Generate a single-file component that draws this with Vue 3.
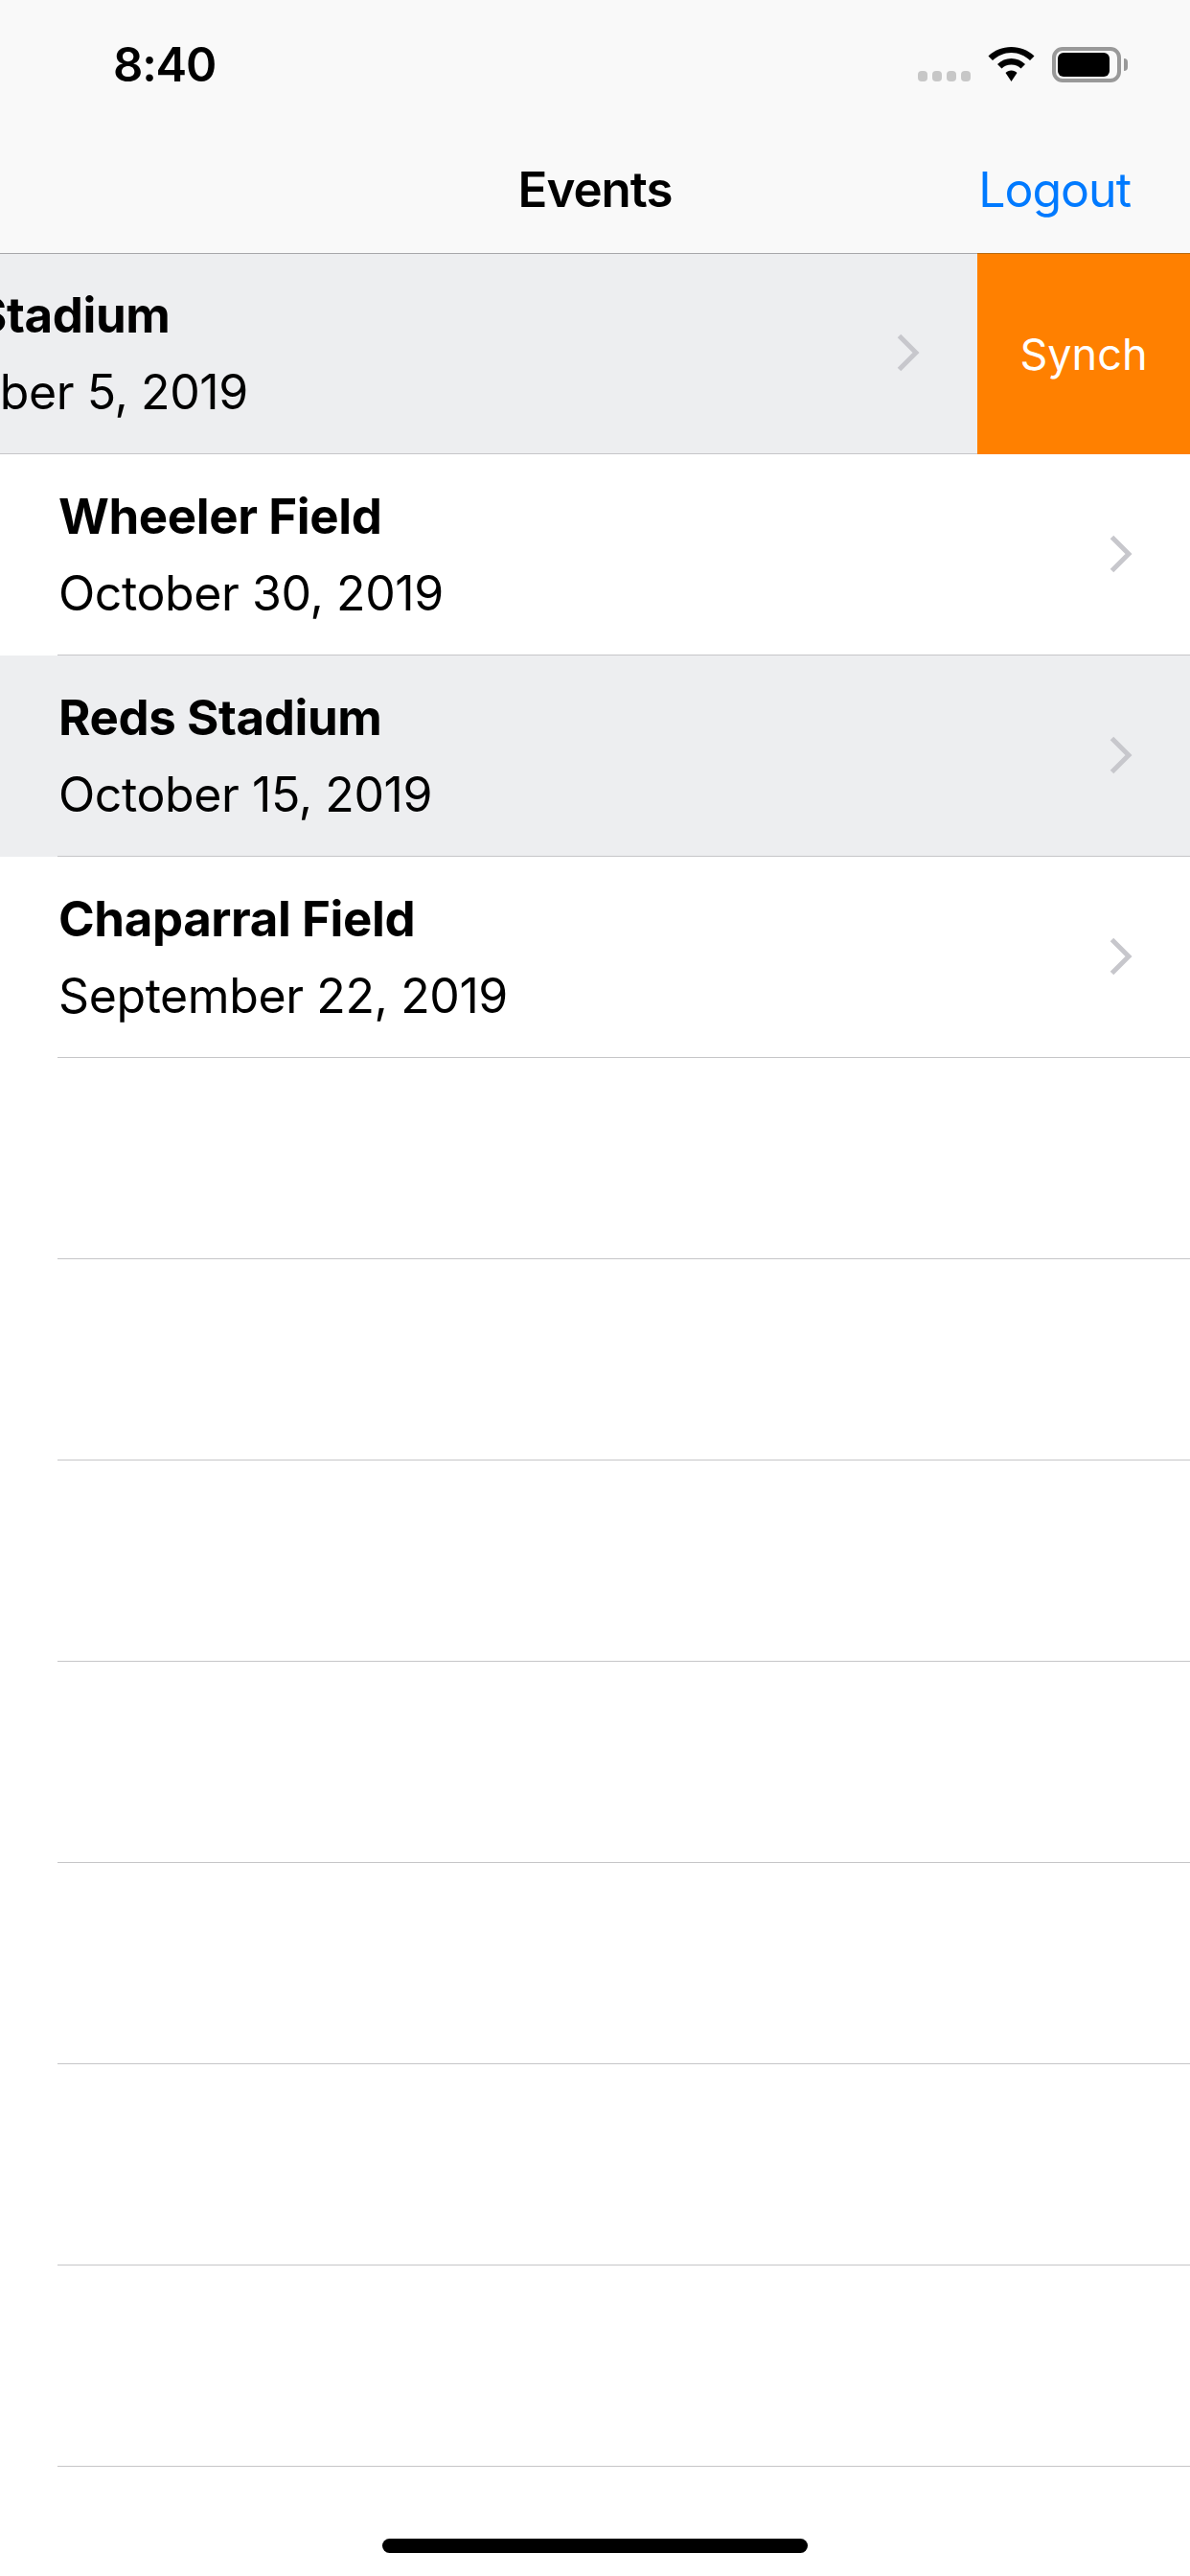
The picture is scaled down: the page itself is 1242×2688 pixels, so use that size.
<template>
  <div class="screen">
    <header class="nav">
      <div class="status">
        <span class="time">8:40</span>
        <div class="status-icons">
          <div class="signal">
            <i v-for="n in 4" :key="n"></i>
          </div>
          <svg class="wifi" width="49" height="36" viewBox="0 0 49 36">
            <path d="M24.500 0C15 0 7 3.500.5 9.500L5 14c5.500-5 12-8 19.500-8S38.500 9 44 14l4.500-4.500C42 3.500 34 0 24.500 0Z" />
            <path d="M24.500 12c-5.500 0-10.500 2-14.500 6l4.500 4.500c2.500-2.500 6-4 10-4s7.500 1.500 10 4L39 18c-4-4-9-6-14.500-6Z" />
            <path d="M24.500 24.500c-2.500 0-4.500 1-6 2.500l6 9 6-9c-1.500-1.500-3.500-2.500-6-2.500Z" />
          </svg>
          <div class="battery">
            <div class="battery-level"></div>
          </div>
        </div>
      </div>
      <div class="nav-bar">
        <span></span>
        <h1>Events</h1>
        <a class="logout">Logout</a>
      </div>
    </header>

    <ul class="list">
      <li
        v-for="(event, index) in events"
        :key="index"
        class="row"
        :class="{ swiped: event.swiped, selected: event.selected }"
      >
        <div class="row-body">
          <div class="row-text">
            <div class="name">{{ event.name }}</div>
            <div class="date">{{ event.date }}</div>
          </div>
          <svg class="chevron" width="24" height="40" viewBox="0 0 24 40">
            <path d="M2.500 2.500L20 20L2.500 37.500" />
          </svg>
        </div>
        <div v-if="event.swiped" class="action">Synch</div>
      </li>
      <li v-for="n in 7" :key="'empty' + n" class="row">
        <div class="row-body"></div>
      </li>
    </ul>

    <div class="home-bar"></div>
  </div>
</template>

<script setup>
const events = [
  { name: 'Reds Stadium', date: 'November 5, 2019', swiped: true, selected: true },
  { name: 'Wheeler Field', date: 'October 30, 2019' },
  { name: 'Reds Stadium', date: 'October 15, 2019', selected: true },
  { name: 'Chaparral Field', date: 'September 22, 2019' }
]
</script>

<style>
html, body {
  margin: 0;
  background: #fff;
}
</style>

<style scoped>
.screen {
  position: relative;
  width: 1242px;
  height: 2688px;
  overflow: hidden;
  background: #fff;
  font-family: Inter, "Liberation Sans", sans-serif;
  color: #000;
}

.nav {
  height: 265px;
  box-sizing: border-box;
  background: #f9f9f9;
  border-bottom: 1px solid #a7a7aa;
}

.status {
  height: 166px;
  box-sizing: border-box;
  padding: 41px 65px 0 118px;
  display: flex;
  justify-content: space-between;
  align-items: flex-start;
}

.time {
  font-size: 49px;
  line-height: 54px;
  font-weight: 600;
  letter-spacing: -1.2px;
}

.status-icons {
  display: flex;
  align-items: flex-end;
  padding-top: 8px;
}

.signal {
  display: flex;
  gap: 5px;
  margin-right: 18px;
  padding-bottom: 1px;
}

.signal i {
  width: 10px;
  height: 11px;
  border-radius: 4px;
  background: #c7c7c7;
}

.wifi {
  fill: #000;
  margin: 0 18px 1px 0;
}

.battery {
  position: relative;
  width: 72px;
  height: 37px;
  margin-right: 7px;
  box-sizing: border-box;
  border: 4px solid #999;
  border-radius: 11px;
  padding: 2px;
}

.battery::after {
  content: "";
  position: absolute;
  right: -11px;
  top: 8px;
  width: 4px;
  height: 13px;
  background: #999;
  border-radius: 0 6px 6px 0;
}

.battery-level {
  width: 54px;
  height: 25px;
  background: #000;
  border-radius: 6px;
}

.nav-bar {
  display: grid;
  grid-template-columns: 1fr auto 1fr;
  align-items: center;
  padding: 0 62px;
}

.nav-bar h1 {
  margin: 0;
  font-size: 51px;
  line-height: 64px;
  font-weight: 600;
  letter-spacing: -1px;
}

.logout {
  justify-self: end;
  font-size: 50px;
  line-height: 64px;
  letter-spacing: -1px;
  color: #007aff;
}

.list {
  margin: 0;
  padding: 0;
  list-style: none;
}

.row {
  height: 210px;
  padding-left: 60px;
  box-sizing: border-box;
  display: flex;
}

.row.selected .row-body,
.row.selected {
  background: #edeef0;
}

.row-body {
  flex: 1;
  min-width: 0;
  box-sizing: border-box;
  display: flex;
  justify-content: space-between;
  align-items: center;
  padding: 0 60px 0 1px;
  border-bottom: 1px solid #c6c6c8;
}

.row-text {
  display: flex;
  flex-direction: column;
}

.name {
  font-size: 51px;
  line-height: 80px;
  font-weight: 700;
  letter-spacing: -0.4px;
}

.date {
  font-size: 50px;
  line-height: 80px;
  letter-spacing: -0.4px;
}

.chevron {
  flex: none;
  margin-bottom: 2px;
  fill: none;
  stroke: #c7c7cc;
  stroke-width: 5;
}

.row.swiped {
  height: 209px;
  padding-left: 0;
  background: #fff;
}

.row.swiped .row-body {
  flex: none;
  width: 1181px;
  margin-left: -161px;
}

.row.swiped .date {
  margin-left: -5px;
}

.action {
  flex: none;
  width: 222px;
  height: 210px;
  margin-top: -1px;
  box-sizing: border-box;
  border-top: 1px solid #b86a10;
  background: #ff8000;
  color: #fff;
  font-size: 45px;
  display: flex;
  align-items: center;
  justify-content: center;
  position: relative;
}

.home-bar {
  position: absolute;
  left: 399px;
  top: 2649px;
  width: 444px;
  height: 15px;
  border-radius: 8px;
  background: #000;
}
</style>
